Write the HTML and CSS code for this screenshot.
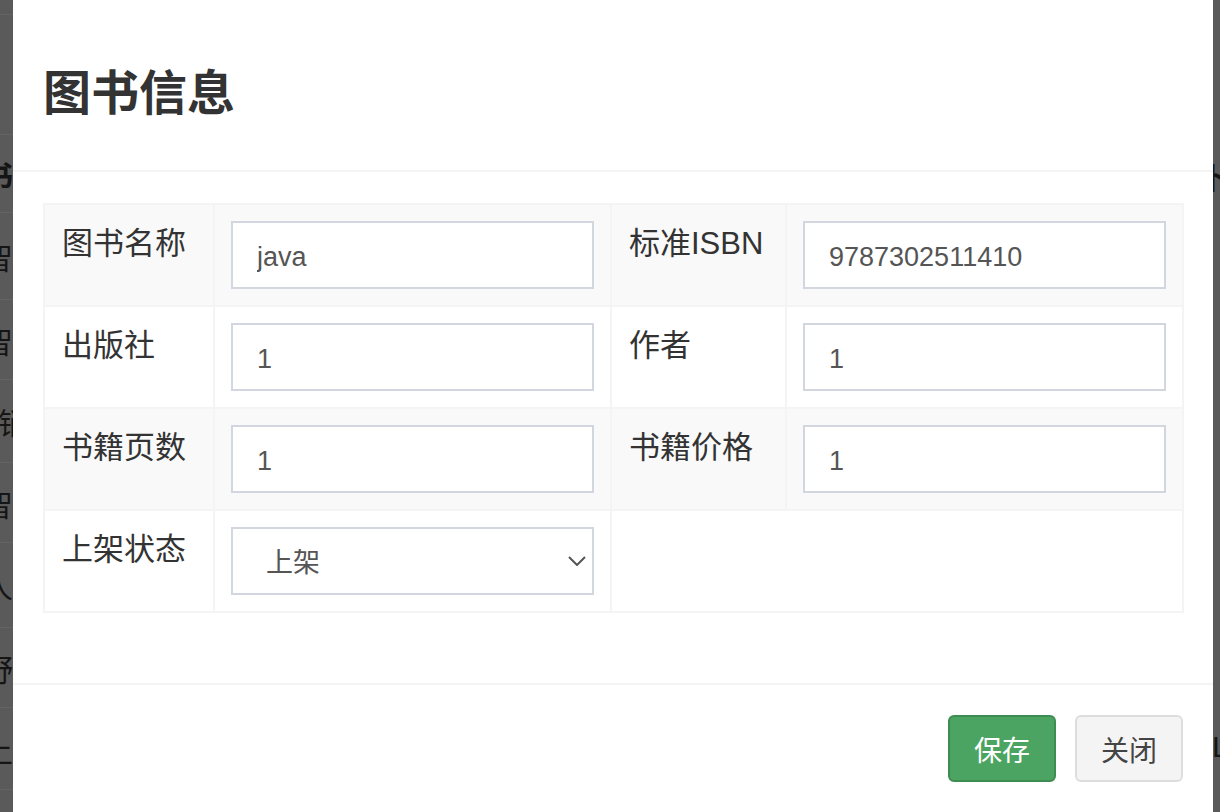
FILE: index.html
```html
<!DOCTYPE html>
<html lang="zh-CN">
<head>
  <meta charset="UTF-8" />
  <title>图书信息</title>
  <link rel="stylesheet" href="styles.css">
</head>
<body>

  <!-- Page behind the backdrop -->
  <div class="page-behind">
    <div class="bg-row" style="height: 15px"></div>
    <div class="bg-row" style="height: 120px"></div>
    <div class="bg-row" style="height: 78px"><span class="bg-cell bold">书</span></div>
    <div class="bg-row" style="height: 87px"><span class="bg-cell">智</span></div>
    <div class="bg-row" style="height: 80px"><span class="bg-cell">智</span></div>
    <div class="bg-row" style="height: 83px"><span class="bg-cell narrow">销</span></div>
    <div class="bg-row" style="height: 80px"><span class="bg-cell">智</span></div>
    <div class="bg-row" style="height: 85px"><span class="bg-cell">人</span></div>
    <div class="bg-row" style="height: 80px"><span class="bg-cell">野</span></div>
    <div class="bg-row" style="height: 82px"><span class="bg-cell">上</span></div>
  </div>
  <div class="bg-right">
    <span class="bg-right-top">卜</span>
    <span class="bg-right-bottom">L</span>
  </div>

  <!-- Modal -->
  <div class="modal">
    <div class="modal-header">
      <h3 class="modal-title">图书信息</h3>
    </div>

    <div class="modal-body">
      <table class="form-table">
        <colgroup>
          <col class="col-label">
          <col class="col-field">
          <col class="col-label2">
          <col class="col-field">
        </colgroup>
        <tr class="striped">
          <td class="label">图书名称</td>
          <td><input class="form-control" type="text" value="java"></td>
          <td class="label">标准ISBN</td>
          <td><input class="form-control" type="text" value="9787302511410"></td>
        </tr>
        <tr>
          <td class="label">出版社</td>
          <td><input class="form-control" type="text" value="1"></td>
          <td class="label">作者</td>
          <td><input class="form-control" type="text" value="1"></td>
        </tr>
        <tr class="striped">
          <td class="label">书籍页数</td>
          <td><input class="form-control" type="text" value="1"></td>
          <td class="label">书籍价格</td>
          <td><input class="form-control" type="text" value="1"></td>
        </tr>
        <tr>
          <td class="label">上架状态</td>
          <td>
            <div class="select-wrap">
              <select class="form-control select">
                <option>上架</option>
                <option>下架</option>
              </select>
              <svg class="chevron" width="18" height="10" viewBox="0 0 18 10">
                <path d="M1 1 L9 9 L17 1" fill="none" stroke="#555" stroke-width="2"/>
              </svg>
            </div>
          </td>
          <td colspan="2"></td>
        </tr>
      </table>
    </div>

    <div class="modal-footer">
      <button class="btn btn-success">保存</button>
      <button class="btn btn-default">关闭</button>
    </div>
  </div>

</body>
</html>
```

FILE: styles.css
```css
body {
  margin: 0;
  height: 812px;
  overflow: hidden;
  background: #5a5a5a;
  font-family: "Liberation Sans", "Noto Sans CJK SC", sans-serif;
  color: #333;
}

/* Page behind the backdrop */
.page-behind {
  width: 40px;
}

.bg-row {
  border-bottom: 1px solid #636363;
  box-sizing: border-box;
  display: flex;
  align-items: center;
  overflow: hidden;
}

.bg-cell {
  margin-left: -17px;
  font-size: 30px;
  color: #151515;
}

.bg-cell.bold {
  font-weight: bold;
}

.bg-cell.narrow {
  margin-left: -2px;
}

.bg-right {
  position: absolute;
  top: 0;
  right: 0;
  width: 8px;
  height: 812px;
  overflow: hidden;
}

.bg-right span {
  position: absolute;
  font-size: 30px;
  color: #151515;
}

.bg-right-top {
  left: -12px;
  top: 154px;
  font-weight: bold;
}

.bg-right-bottom {
  left: 0;
  top: 730px;
}

/* Modal */
.modal {
  position: absolute;
  left: 13px;
  top: 0;
  width: 1200px;
  height: 840px;
  background: #fff;
}

.modal-header {
  height: 172px;
  box-sizing: border-box;
  padding: 18px 30px 0;
  border-bottom: 2px solid #f4f4f4;
  display: flex;
  align-items: center;
}

.modal-title {
  margin: 0;
  font-size: 48px;
  font-weight: bold;
  color: #333;
  line-height: 1.1;
}

.modal-body {
  padding: 31px 30px 70px;
}

/* Form table */
.form-table {
  width: 1140px;
  border-collapse: collapse;
  table-layout: fixed;
}

.col-label { width: 170px; }
.col-label2 { width: 175px; }
.col-field { width: 397px; }

.form-table td {
  border: 2px solid #f4f4f4;
  padding: 16px;
  vertical-align: top;
  height: 68px;
}

.form-table tr.striped td {
  background: #f9f9f9;
}

.form-table td.label {
  font-size: 31px;
  line-height: 45px;
  padding-left: 17px;
  color: #333;
}

.form-control {
  display: block;
  width: 100%;
  height: 68px;
  box-sizing: border-box;
  padding: 14px 24px 10px;
  border: 2px solid #d2d6de;
  border-radius: 0;
  background: #fff;
  font-family: "Liberation Sans", "Noto Sans CJK SC", sans-serif;
  font-size: 27px;
  color: #555;
  outline: none;
}

.select-wrap {
  position: relative;
}

.select {
  appearance: none;
  -webkit-appearance: none;
  padding-left: 33px;
}

.chevron {
  position: absolute;
  right: 8px;
  top: 29px;
  pointer-events: none;
}

/* Footer */
.modal-footer {
  border-top: 2px solid #f4f4f4;
  padding: 30px;
  display: flex;
  justify-content: flex-end;
  gap: 19px;
}

.btn {
  width: 108px;
  height: 67px;
  box-sizing: border-box;
  border-radius: 6px;
  font-family: "Liberation Sans", "Noto Sans CJK SC", sans-serif;
  font-size: 28px;
  padding: 0;
}

.btn-success {
  background: #4ba462;
  border: 2px solid #3f8c53;
  color: #fff;
}

.btn-default {
  background: #f4f4f4;
  border: 2px solid #ddd;
  color: #444;
}
```
